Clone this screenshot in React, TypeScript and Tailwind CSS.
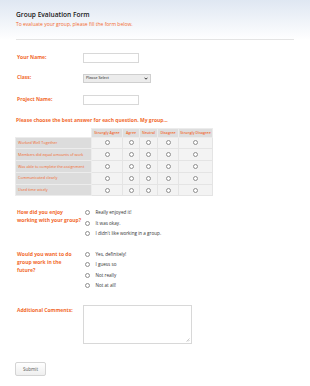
import React from "react"

const orange = "text-[color:#f26a2e]"

const rows = [
  "Worked Well Together",
  "Members did equal amounts of work",
  "Was able to complete the assignment",
  "Communicated clearly",
  "Used time wisely",
]

const cols = ["Strongly Agree", "Agree", "Neutral", "Disagree", "Strongly Disagree"]
const colW = ["w-[31px]", "w-[17px]", "w-[18px]", "w-[21px]", "w-[34px]"]

function Radio() {
  return <span className="inline-block w-[5px] h-[5px] rounded-full border-[0.7px] border-[#8f8f8f] bg-white shrink-0" />
}

function Option({ label }: { label: string }) {
  return (
    <div className="flex items-center h-[10.5px]">
      <Radio />
      <span className="ml-[5.5px] text-[length:4.6px] text-[color:#333]">{label}</span>
    </div>
  )
}

export default function App() {
  return (
    <div className="w-[310px] h-[386px] bg-white overflow-hidden" style={{ fontFamily: "'Open Sans', sans-serif" }}>
      {/* header */}
      <div className="bg-gradient-to-b from-[#dfe7f2] to-white px-[16px] pt-[11px]">
        <div className="text-[length:6.6px] font-semibold text-neutral-900 leading-[8px]">Group Evaluation Form</div>
        <p className={`text-[length:5px] ${orange} leading-[8px] mt-[0.5px]`}>To evaluate your group, please fill the form below.</p>
        <div className="border-b border-[#e4e4e4] pt-[11px]" />
      </div>

      <div className="px-[16px]">
        {/* text fields */}
        <div className="flex items-center mt-[13px]">
          <span className={`w-[67px] pl-[1px] text-[length:5px] font-bold ${orange}`}>Your Name:</span>
          <div className="w-[56px] h-[10px] border border-[#d8d8d8] bg-white" />
        </div>
        <div className="flex items-center mt-[11px]">
          <span className={`w-[67px] pl-[1px] text-[length:5px] font-bold ${orange}`}>Class:</span>
          <div className="w-[68px] h-[9px] border border-[#cfcfcf] bg-[#ececec] flex items-center justify-between px-[2px]">
            <span className="text-[length:3.8px] text-[color:#222]">Please Select</span>
            <svg width="4" height="3" viewBox="0 0 4 3"><path d="M0.5 0.7 L2 2.2 L3.5 0.7" stroke="#222" strokeWidth="0.9" fill="none" /></svg>
          </div>
        </div>
        <div className="flex items-center mt-[12px]">
          <span className={`w-[67px] pl-[1px] text-[length:5px] font-bold ${orange}`}>Project Name:</span>
          <div className="w-[56px] h-[10px] border border-[#d8d8d8] bg-white" />
        </div>

        {/* matrix */}
        <p className={`mt-[11px] text-[length:5px] font-bold ${orange} leading-[8px]`}>Please choose the best answer for each question. My group...</p>
        <table className="mt-[4px] -ml-[1px] border-collapse">
          <thead>
            <tr className="h-[9px]">
              <th className="w-[76px] bg-white" />
              {cols.map((c, i) => (
                <th key={c} className={`${colW[i]} bg-[#dedede] border border-[#ececec] text-[length:3.6px] font-semibold ${orange} whitespace-nowrap p-0`}>
                  {c}
                </th>
              ))}
            </tr>
          </thead>
          <tbody>
            {rows.map((r) => (
              <tr key={r} className="h-[11.8px]">
                <td className={`bg-[#dcdcdc] border border-[#ececec] text-[length:3.8px] ${orange} pl-[2px] whitespace-nowrap`}>{r}</td>
                {cols.map((c) => (
                  <td key={c} className="bg-[#f3f3f3] border border-[#e4e4e4] p-0">
                    <div className="flex justify-center items-center">
                      <Radio />
                    </div>
                  </td>
                ))}
              </tr>
            ))}
          </tbody>
        </table>

        {/* questions */}
        <div className="flex mt-[12px]">
          <span className={`w-[69px] pl-[1px] text-[length:5px] font-bold ${orange} leading-[8px] shrink-0 whitespace-nowrap`}>
            How did you enjoy
            <br />
            working with your group?
          </span>
          <div className="-mt-[1px]">
            <Option label="Really enjoyed it!" />
            <Option label="It was okay." />
            <Option label="I didn't like working in a group." />
          </div>
        </div>

        <div className="flex mt-[11px]">
          <span className={`w-[69px] pl-[1px] text-[length:5px] font-bold ${orange} leading-[8px] shrink-0 whitespace-nowrap`}>
            Would you want to do
            <br />
            group work in the
            <br />
            future?
          </span>
          <div className="-mt-[1px]">
            <Option label="Yes, definitely!" />
            <Option label="I guess so" />
            <Option label="Not really" />
            <Option label="Not at all!" />
          </div>
        </div>

        <div className="flex mt-[14px]">
          <span className={`w-[67px] pl-[1px] text-[length:5px] font-bold ${orange} leading-[8px] pt-[1px] shrink-0`}>Additional Comments:</span>
          <div className="relative w-[109px] h-[39px] border border-[#d8d8d8] bg-white">
            <svg className="absolute right-[1px] bottom-[1px]" width="4" height="4" viewBox="0 0 4 4">
              <path d="M3.5 0.5 L0.5 3.5 M3.5 2 L2 3.5" stroke="#999" strokeWidth="0.5" />
            </svg>
          </div>
        </div>

        <button className="mt-[18px] -ml-[1px] w-[31px] h-[14px] border border-[#d4d4d4] rounded-[2px] bg-gradient-to-b from-white to-[#efefef] text-[length:4.6px] text-[color:#555]">
          Submit
        </button>
      </div>
    </div>
  )
}
